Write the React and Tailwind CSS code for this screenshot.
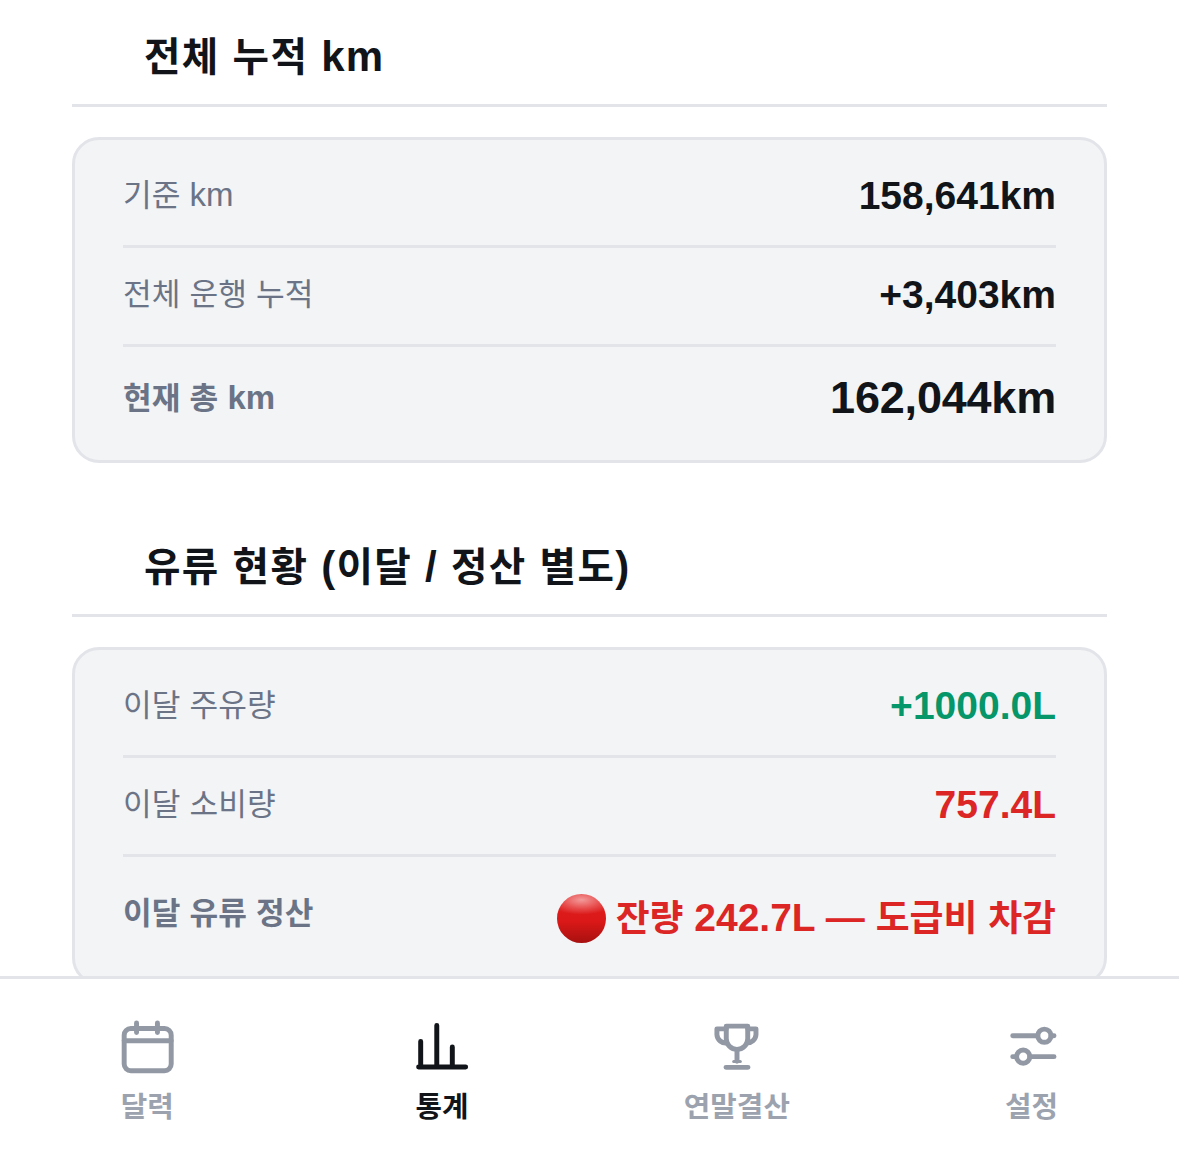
const font = { fontFamily: '"Liberation Sans","Noto Sans CJK KR",sans-serif' };

// Hangul runs sit slightly smaller than the Latin text next to them.
function K({ children }) {
  return String(children)
    .split(/([\uAC00-\uD7A3]+)/)
    .map((part, i) =>
      /[\uAC00-\uD7A3]/.test(part) ? (
        <span key={i} className="text-[0.945em]">{part}</span>
      ) : (
        part
      )
    );
}

function Heading({ children }) {
  return (
    <div className="h-[107px] border-b-[3px] border-[#e2e4e9] pl-[72px] pb-[20px] flex items-end">
      <h2 className="text-[42px] leading-[54px] font-bold text-[#111418] tracking-[1.3px]">
        <K>{children}</K>
      </h2>
    </div>
  );
}

function Row({ label, value, strong, last, rowH = "h-[104px]", color = "text-[#111418]", size = "text-[39px]", shift = "-mt-[2px]", labelShift = "-mt-[5px]", extra }) {
  return (
    <div className={`flex items-center justify-between ${last ? rowH : "h-[99px] border-b-[3px] border-[#e2e4e9]"}`}>
      <span className={`text-[33px] leading-[45px] text-[#6b7487] ${labelShift} ${strong ? "font-bold" : "font-normal"}`}>
        <K>{label}</K>
      </span>
      <span className={`flex items-center gap-[10px] font-bold ${size} ${color} ${shift}`}>
        {extra}
        <span>
          <K>{value}</K>
        </span>
      </span>
    </div>
  );
}

function Card({ children }) {
  return (
    <div className="mt-[30px] bg-[#f3f4f6] border-[3px] border-[#e2e4e9] rounded-[27px] px-[48px] py-[9px]">
      {children}
    </div>
  );
}

const Stroke = ({ children }) => (
  <svg width="66" height="66" viewBox="0 0 24 24" fill="none" stroke="currentColor" strokeWidth="1.8" strokeLinecap="round" strokeLinejoin="round">
    {children}
  </svg>
);

const nav = [
  {
    label: "달력",
    icon: (
      <Stroke>
        <rect x="3.7" y="5.3" width="17.1" height="15.3" rx="2.4" />
        <path d="M3.7 9.7h17.1M8.2 3.300v3.400M15.800 3.300v3.400" />
      </Stroke>
    ),
  },
  {
    label: "통계",
    active: true,
    icon: (
      <Stroke>
        <path d="M3.500 19.300h17.100M10.100 4.200v15.100M4.250 10v9.300M15.750 12v7.300" />
      </Stroke>
    ),
  },
  {
    label: "연말결산",
    icon: (
      <Stroke>
        <path d="M8.100 4.400h7.800V9a3.900 3.900 0 0 1-7.800 0V4.400Z" />
        <path d="M8.100 5.400H4.700v2.100a3.200 3.200 0 0 0 3.700 3M15.900 5.400h3v2.100a3.200 3.200 0 0 1-3.300 3" />
        <path d="M12 13v4.200M8 19.400h8" />
        <path d="M10.800 17.300h2.400" strokeWidth="1.100" />
      </Stroke>
    ),
  },
  {
    label: "설정",
    icon: (
      <Stroke>
        <path d="M5 7.900h9.100M18.900 7.900H20M5 15.500h1.400M11.200 15.500H20" />
        <circle cx="16.500" cy="7.900" r="2.400" />
        <circle cx="8.800" cy="15.500" r="2.400" />
      </Stroke>
    ),
  },
];

export default function App() {
  return (
    <div style={font} className="relative w-[1179px] h-[1165px] overflow-hidden bg-white">
      <div className="px-[72px]">
        <Heading>전체 누적 km</Heading>
        <Card>
          <Row label="기준 km" value="158,641km" />
          <Row label="전체 운행 누적" value="+3,403km" />
          <Row label="현재 총 km" value="162,044km" strong last size="text-[45px] tracking-[-0.2px]" shift="-mt-[2px]" labelShift="-mt-[3px]" />
        </Card>
        <div className="mt-[47px]">
          <Heading>유류 현황 (이달 / 정산 별도)</Heading>
        </div>
        <Card>
          <Row label="이달 주유량" value="+1000.0L" color="text-[#059669]" />
          <Row label="이달 소비량" value="757.4L" color="text-[#dc2626]" />
          <Row
            label="이달 유류 정산"
            value="잔량 242.7L — 도급비 차감"
            strong
            last
            rowH="h-[116px]"
            shift="mt-[6px]"
            labelShift="-mt-[4px]"
            color="text-[#dc2626]"
            extra={
              <span className="inline-block w-[49px] h-[49px] rounded-full bg-[radial-gradient(ellipse_70%_30%_at_50%_12%,#f39a9a_0%,#e85050_55%,transparent_100%),linear-gradient(180deg,#dc2020_0%,#dc1818_55%,#a81010_100%)]" />
            }
          />
        </Card>
      </div>
      <nav className="absolute left-0 right-0 bottom-0 h-[189px] bg-white border-t-[3px] border-[#e2e4e9] grid grid-cols-4 pt-[35px]">
        {nav.map((n) => (
          <div key={n.label} className={`flex flex-col items-center ${n.active ? "text-[#111418]" : "text-[#9ca3af]"}`}>
            <span className={`h-[66px] ${n.active ? "" : "text-[#9299a5]"}`}>{n.icon}</span>
            <span className="mt-[6px] text-[30.5px] leading-[40px] font-bold">
              <K>{n.label}</K>
            </span>
          </div>
        ))}
      </nav>
    </div>
  );
}
